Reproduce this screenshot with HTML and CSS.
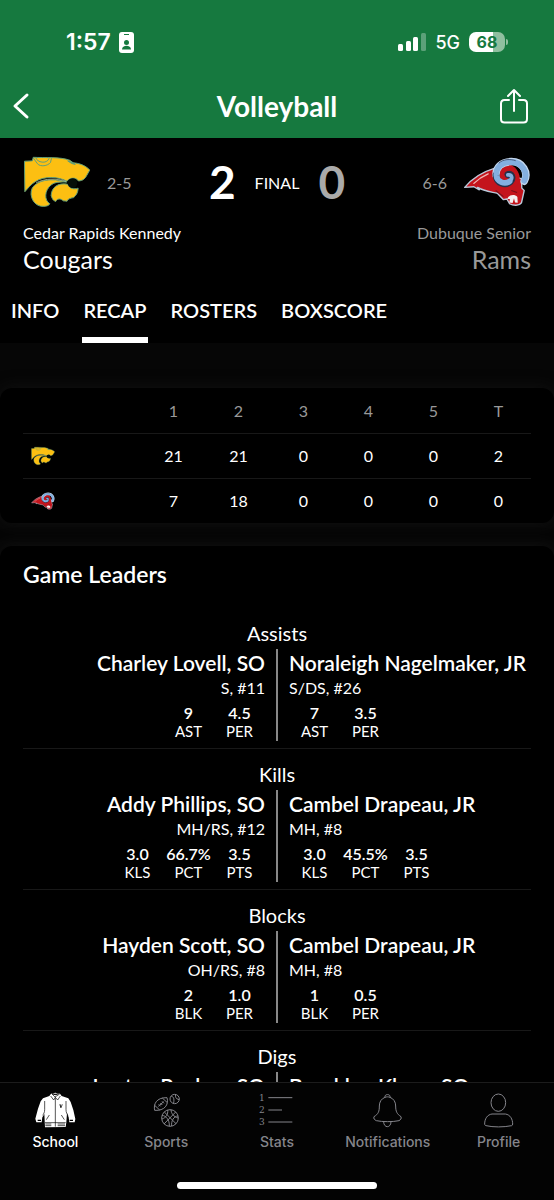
FILE: index.html
```html
<!DOCTYPE html>
<html lang="en">
<head>
<meta charset="utf-8">
<meta name="viewport" content="width=device-width, initial-scale=1">
<title>Volleyball</title>
<link rel="stylesheet" href="styles.css">
</head>
<body>
<svg class="defs" aria-hidden="true">
  <symbol id="cougar" viewBox="64 48 208 160">
    <g stroke="#5f9e79" stroke-width="3" stroke-linejoin="round" fill="#fcbf12">
      <path d="M68 64 L92 63 L95 52 C130 54 178 50 207 61 L218 69 C238 70 256 78 269 91 L260 107 C254 119 247 124 234 125 C228 113 207 113 199 126 C175 112 130 108 101 127 C87 136 79 147 69 158 Z"/>
      <path d="M198 128 C150 114 108 122 92 146 C80 172 98 205 127 203 C136 203 144 200 146 195 C128 184 129 154 150 137 C160 128 178 127 198 128 Z"/>
      <path d="M201 135 C170 129 151 145 150 170 C153 180 157 186 164 188 C169 178 179 178 187 186 L199 187 C201 181 207 178 219 176 C226 170 233 161 233 147 C220 151 207 149 201 135 Z"/>
      <path fill="none" d="M95 54 L108 72 C117 82 139 79 148 68 L151 55 M103 54 C107 67 136 75 144 55"/>
      <path fill="#5f9e79" d="M201 63 L220 70 L224 74 L213 71 Z"/>
    </g>
    <path fill="none" stroke="#d4d9b0" stroke-width="2" d="M104 130 C135 116 165 116 196 126"/>
    <path fill="#060f08" d="M200 127 C210 111 228 115 230 128 C232 143 219 150 208 144 C203 141 200 135 200 127 Z"/>
  </symbol>
  <symbol id="ram" viewBox="562 50 200 152">
    <path fill="#c4141c" stroke="#b9c9da" stroke-width="4" stroke-linejoin="round" d="M567 142 C586 118 613 98 656 85 L734 117 L735 144 L742 151 L734 187 C727 197 710 196 699 190 L691 176 L681 178 L663 159 C646 155 623 153 605 142 L610 149 L594 140 Z"/>
    <circle cx="692" cy="106" r="32" fill="#c4141c"/>
    <g fill="none" stroke-linecap="round">
      <path stroke="#c3d7ee" stroke-width="22" d="M742 124 C756 98 738 66 704 66 C674 66 658 84 659 106"/>
      <path stroke="#26314a" stroke-width="20" d="M659 106 C661 130 686 138 701 125 C712 113 704 100 694 104"/>
      <path stroke="#84afdf" stroke-width="17" d="M742 122 C754 98 736 68 704 67 C674 67 659 84 660 106 C662 126 684 134 699 124"/>
      <path stroke="#84afdf" stroke-width="11" d="M696 126 C711 117 706 103 694 105"/>
      <path stroke="#c4141c" stroke-width="11" d="M716 134 C732 112 718 86 697 87 C680 88 672 102 680 111"/>
      <path stroke="#26314a" stroke-width="2" d="M668 70 C680 58 702 58 716 63"/>
      <path stroke="#f0b8b5" stroke-width="4" d="M594 130 C610 114 622 108 636 102"/>
    </g>
    <path fill="#f4f2f2" d="M692 176 C697 163 714 161 722 170 L723 187 L715 186 L712 174 L708 188 L698 186 L700 176 Z"/>
    <path fill="none" stroke="#751019" stroke-width="3" d="M658 151 L681 169 M704 151 L721 157"/>
  </symbol>
</svg>

<div class="app">
  <header class="top">
    <div class="status">
      <div class="status-time">
        <span>1:57</span>
        <svg class="id-icon" viewBox="0 0 15 21" aria-hidden="true"><rect width="15" height="21" rx="3" fill="#fff"/><rect x="5" y="2" width="5" height="1" fill="#16793f"/><circle cx="7.500" cy="10.500" r="2.500" fill="#16793f"/><path fill="#16793f" d="M3 17.500c0-5 9-5 9 0z"/></svg>
      </div>
      <div class="status-net">
        <svg class="signal" viewBox="0 0 28 18" aria-hidden="true"><g fill="#fff"><rect y="11" width="5" height="7" rx="1.500"/><rect x="8" y="8" width="5" height="10" rx="1.500"/><rect x="15" y="4" width="5" height="14" rx="1.500"/><rect x="23" width="5" height="18" rx="1.500" opacity=".3"/></g></svg>
        <span class="net">5G</span>
        <span class="battery">68</span>
      </div>
    </div>
    <div class="bar">
      <button class="icon-btn" aria-label="Back"><svg class="back" viewBox="0 0 18 28" aria-hidden="true"><path d="M15 3 L3 14 L15 25" fill="none" stroke="#fff" stroke-width="3" stroke-linecap="round" stroke-linejoin="round"/></svg></button>
      <h1>Volleyball</h1>
      <button class="icon-btn end" aria-label="Share"><svg class="share" viewBox="0 0 28 36" aria-hidden="true"><path d="M9 12H4.500Q1 12 1 15.500V31Q1 34.500 4.500 34.500H23.500Q27 34.500 27 31V15.500Q27 12 23.500 12H19M14 23V2M8 8l6-6 6 6" fill="none" stroke="#fff" stroke-width="2" stroke-linecap="round" stroke-linejoin="round"/></svg></button>
    </div>
  </header>

  <main class="content">
    <section class="match">
      <div class="score-row">
        <div class="side"><svg class="logo" role="img" aria-label="Cougars"><use href="#cougar"/></svg><span class="record">2-5</span></div>
        <div class="score"><strong>2</strong><span>FINAL</span><strong class="lost">0</strong></div>
        <div class="side away"><span class="record">6-6</span><svg class="logo" role="img" aria-label="Rams"><use href="#ram"/></svg></div>
      </div>
      <div class="names">
        <div><p class="school">Cedar Rapids Kennedy</p><p class="team">Cougars</p></div>
        <div class="away-name"><p class="school">Dubuque Senior</p><p class="team">Rams</p></div>
      </div>
      <nav class="tabs" aria-label="Game">
        <a href="#info">INFO</a><a href="#recap" class="active">RECAP</a><a href="#rosters">ROSTERS</a><a href="#boxscore">BOXSCORE</a>
      </nav>
    </section>

    <section class="card">
      <table class="sets">
        <thead><tr><td class="team-cell"></td><th>1</th><th>2</th><th>3</th><th>4</th><th>5</th><th>T</th></tr></thead>
        <tbody>
          <tr><td class="team-cell"><svg class="mini" role="img" aria-label="Cougars"><use href="#cougar"/></svg></td><td>21</td><td>21</td><td>0</td><td>0</td><td>0</td><td>2</td></tr>
          <tr><td class="team-cell"><svg class="mini" role="img" aria-label="Rams"><use href="#ram"/></svg></td><td>7</td><td>18</td><td>0</td><td>0</td><td>0</td><td>0</td></tr>
        </tbody>
      </table>
    </section>

    <section class="card leaders">
      <h2>Game Leaders</h2>
      <article class="leader">
        <h3>Assists</h3>
        <div class="pair">
          <div class="player home"><p class="name">Charley Lovell, SO</p><p class="pos">S, #11</p>
            <dl><div><dd>9</dd><dt>AST</dt></div><div><dd>4.5</dd><dt>PER</dt></div></dl></div>
          <div class="player"><p class="name">Noraleigh Nagelmaker, JR</p><p class="pos">S/DS, #26</p>
            <dl><div><dd>7</dd><dt>AST</dt></div><div><dd>3.5</dd><dt>PER</dt></div></dl></div>
        </div>
      </article>
      <article class="leader">
        <h3>Kills</h3>
        <div class="pair">
          <div class="player home"><p class="name">Addy Phillips, SO</p><p class="pos">MH/RS, #12</p>
            <dl><div><dd>3.0</dd><dt>KLS</dt></div><div><dd>66.7%</dd><dt>PCT</dt></div><div><dd>3.5</dd><dt>PTS</dt></div></dl></div>
          <div class="player"><p class="name">Cambel Drapeau, JR</p><p class="pos">MH, #8</p>
            <dl><div><dd>3.0</dd><dt>KLS</dt></div><div><dd>45.5%</dd><dt>PCT</dt></div><div><dd>3.5</dd><dt>PTS</dt></div></dl></div>
        </div>
      </article>
      <article class="leader">
        <h3>Blocks</h3>
        <div class="pair">
          <div class="player home"><p class="name">Hayden Scott, SO</p><p class="pos">OH/RS, #8</p>
            <dl><div><dd>2</dd><dt>BLK</dt></div><div><dd>1.0</dd><dt>PER</dt></div></dl></div>
          <div class="player"><p class="name">Cambel Drapeau, JR</p><p class="pos">MH, #8</p>
            <dl><div><dd>1</dd><dt>BLK</dt></div><div><dd>0.5</dd><dt>PER</dt></div></dl></div>
        </div>
      </article>
      <article class="leader">
        <h3>Digs</h3>
        <div class="pair">
          <div class="player home"><p class="name">Laytyn Pankey, SO</p></div>
          <div class="player"><p class="name">Brooklyn Kluge, SO</p></div>
        </div>
      </article>
    </section>
  </main>

  <footer class="bottom">
    <nav class="navbar" aria-label="Main">
      <a href="#school" class="current">
        <svg viewBox="104 64 123 111" aria-hidden="true">
          <path fill="#fff" d="M152 69 L165 66 L179 69 L184 76 L204 83 L211 94 L219 118 L225 145 L223 155 L207 155 L205 140 L200 128 L198 155 L196 169 L134 170 L132 130 L126 140 L124 155 L108 155 L105 144 L113 114 L121 92 L128 83 L147 76 Z"/>
          <path fill="none" stroke="#000" stroke-width="2" d="M154 69l10 10 14-9M151 76l9 12 5-8 7 8 8-12M165 80v88M133 91v26c0 8-3 13-6 17M197 91v26c0 8 3 13 6 17M147 133l-9 14M183 133l9 14M134 156h62M178 101l4 10 4-10M181 101v10M135 160h18M172 160h22M135 165h18M172 165h22"/>
          <path stroke="#000" stroke-width="4" d="M112 149h10M208 149h10"/>
          <path stroke="#000" stroke-width="3" d="M155 69l10 3 10-3"/>
        </svg><span>School</span></a>
      <a href="#sports">
        <svg viewBox="435 64 123 111" aria-hidden="true"><g fill="none" stroke="#85858b" stroke-width="3">
          <path d="M461 119C457 102 465 80 498 81C504 102 491 121 461 119ZM460 103l16 15M484 82l15 14M472 107l16-14M473 101l6 6M478 97l6 6M483 92l6 6"/>
          <circle cx="521" cy="85" r="14"/><path d="M511 77c7 1 9 7 7 20M524 71c-2 8 1 14 10 16"/>
          <circle cx="507" cy="142" r="25"/><path d="M490 124l35 35M524 124l-35 36M500 118c2 13-5 23-17 27M483 134c12 1 23 14 22 32M531 136c-13 0-21 16-19 30M510 117c0 11 9 22 21 25"/></g>
        </svg><span>Sports</span></a>
      <a href="#stats">
        <svg viewBox="769 64 123 111" aria-hidden="true"><path fill="none" stroke="#85858b" stroke-width="3" d="M806 81h72M806 118h41M806 154h72"/><g class="digits"><text x="778" y="92">1</text><text x="778" y="128">2</text><text x="778" y="164">3</text></g></svg><span>Stats</span></a>
      <a href="#notifications">
        <svg viewBox="269 64 123 111" aria-hidden="true"><path fill="none" stroke="#85858b" stroke-width="3" d="M323 80c-3-11 18-11 15 0M323 80c-11 4-17 14-17 26 0 17-3 24-16 32-2 6 1 9 7 12 18 4 50 4 68 0 5-3 8-6 6-12-12-8-16-15-16-32 0-12-6-22-17-26-5-2-10-2-15 0ZM319 153c0 20 22 20 22 0"/></svg><span>Notifications</span></a>
      <a href="#profile">
        <svg viewBox="601 64 123 111" aria-hidden="true"><g fill="none" stroke="#85858b" stroke-width="3"><ellipse cx="662" cy="96" rx="22" ry="26"/><path d="M643 130h40c15 2 22 16 22 30 0 3-1 4-3 5-25 5-55 5-77 0-3-1-4-2-4-5 0-16 8-28 22-30Z"/></g></svg><span>Profile</span></a>
    </nav>
    <div class="home-indicator"></div>
  </footer>
</div>
</body>
</html>
```
FILE: styles.css
```css
* { box-sizing: border-box; }

body, p, h1, h2, h3, dl, dd { margin: 0; }

body {
  background: #000;
  color: #fff;
  font-family: Lato, "Open Sans", sans-serif;
  font-size: 16px;
}

a { color: inherit; text-decoration: none; }
svg { display: block; }
.defs { position: absolute; width: 0; height: 0; }

.app { display: flex; flex-direction: column; height: 100vh; }

/* Header */
.top {
  flex: none;
  background: #16793f;
  padding-top: 24px;
}

.status {
  display: flex;
  align-items: center;
  justify-content: space-between;
  height: 36px;
  padding: 0 49px 0 66px;
  font-family: Inter, sans-serif;
}

.status-time, .status-net { display: flex; align-items: center; }
.status-time { gap: 8px; font-size: 23px; font-weight: 600; }
.id-icon { width: 15px; height: 21px; }
.status-net { gap: 9px; }
.signal { width: 28px; height: 18px; }
.net { font-size: 18px; font-weight: 500; }

.battery {
  position: relative;
  width: 36px;
  border-radius: 7px;
  background: linear-gradient(to right, #fff 68%, #8fbf9f 68%);
  color: #16793f;
  font-size: 16px;
  font-weight: 700;
  line-height: 20px;
  text-align: center;
}

.battery::after {
  content: "";
  position: absolute;
  left: 37px;
  top: 7px;
  width: 2px;
  height: 6px;
  border-radius: 0 2px 2px 0;
  background: #8fbf9f;
}

.bar {
  display: grid;
  grid-template-columns: 1fr auto 1fr;
  align-items: center;
  height: 78px;
  padding: 14px 26px 0 12px;
}

.bar h1 { padding-left: 14px; font-size: 28px; font-weight: 700; line-height: 32px; }

.icon-btn { justify-self: start; padding: 0; border: 0; background: none; }
.icon-btn.end { justify-self: end; }
.back { width: 18px; height: 28px; }
.share { width: 28px; height: 36px; }

/* Content */
.content { flex: 1; min-height: 0; overflow: hidden; background: #060606; }

.match { background: #000; }

.score-row {
  display: grid;
  grid-template-columns: 1fr auto 1fr;
  align-items: center;
  padding: 18px 23px 0;
}

.side { display: flex; align-items: center; gap: 16px; }
.away { justify-content: flex-end; }
.logo { width: 68px; height: 52px; }
.record { color: #999; font-size: 16px; }

.score { display: flex; align-items: center; gap: 19px; }
.score strong { font-size: 46px; font-weight: 700; line-height: 52px; }
.score .lost { color: #aaa; }

.names {
  display: flex;
  justify-content: space-between;
  padding: 14px 23px 0;
}

.school { font-size: 16px; line-height: 22px; }
.team { font-size: 25px; line-height: 30px; }
.away-name { color: #999; text-align: right; }

.tabs {
  display: flex;
  gap: 22px;
  padding: 20px 10px 0;
  font-size: 20px;
  font-weight: 600;
  line-height: 33px;
}

.tabs a { padding: 0 1px 10px; border-bottom: 6px solid transparent; }
.tabs .active { border-color: #fff; }

.card {
  margin-top: 23px;
  padding: 0 23px;
  border-radius: 12px;
  background: #000;
  box-shadow: 0 0 16px #111;
}

.match + .card { margin-top: 45px; }

.sets { width: 100%; border-collapse: collapse; table-layout: fixed; font-size: 16px; }
.sets th, .sets td { height: 45px; padding: 0; text-align: center; }
.sets th { color: #999; font-weight: 400; }
.sets .team-cell { width: 118px; padding-left: 8px; }
.sets tbody tr { border-top: 1px solid #181818; }
.mini { width: 24px; height: 20px; }

.leaders { padding-top: 16px; }
.leaders h2 { margin-bottom: 22px; font-size: 23px; font-weight: 600; line-height: 24px; }

.leader { padding: 13px 0 7px; border-bottom: 1px solid #181818; }
.leader h3 { margin-bottom: 4px; font-size: 20px; font-weight: 400; line-height: 24px; text-align: center; }

.pair { display: grid; grid-template-columns: 1fr 2px 1fr; min-height: 92px; }
.pair::before { content: ""; grid-area: 1 / 2; background: #888; }

.player { grid-row: 1; min-width: 0; padding: 2px 0 0 11px; white-space: nowrap; }
.home { padding: 2px 11px 0 0; text-align: right; }
.name { font-size: 21px; font-weight: 600; line-height: 24px; }
.pos { font-size: 16px; line-height: 25px; }

.player dl { display: flex; margin-top: 4px; }
.home dl { justify-content: flex-end; }
.player dl div { width: 51px; text-align: center; line-height: 19px; }
.player dd { font-size: 16px; font-weight: 600; line-height: 18px; }
.player dt { font-size: 15px; }

/* Bottom navigation */
.bottom { flex: none; background: #030303; border-top: 1px solid #1c1c1c; }

.navbar {
  display: grid;
  grid-template-columns: repeat(5, 1fr);
  padding-top: 9px;
  color: #85858b;
  font-family: Inter, sans-serif;
  font-size: 14px;
  font-weight: 500;
}

.navbar a { display: flex; flex-direction: column; align-items: center; gap: 3px; line-height: 20px; }
.navbar svg { width: 41px; height: 37px; }
.navbar .current { color: #fff; }
.digits { fill: #85858b; font-family: "DejaVu Serif", serif; font-size: 27px; }

.home-indicator {
  width: 36%;
  height: 7px;
  margin: 30px auto 11px;
  border-radius: 4px;
  background: #fff;
}
```
